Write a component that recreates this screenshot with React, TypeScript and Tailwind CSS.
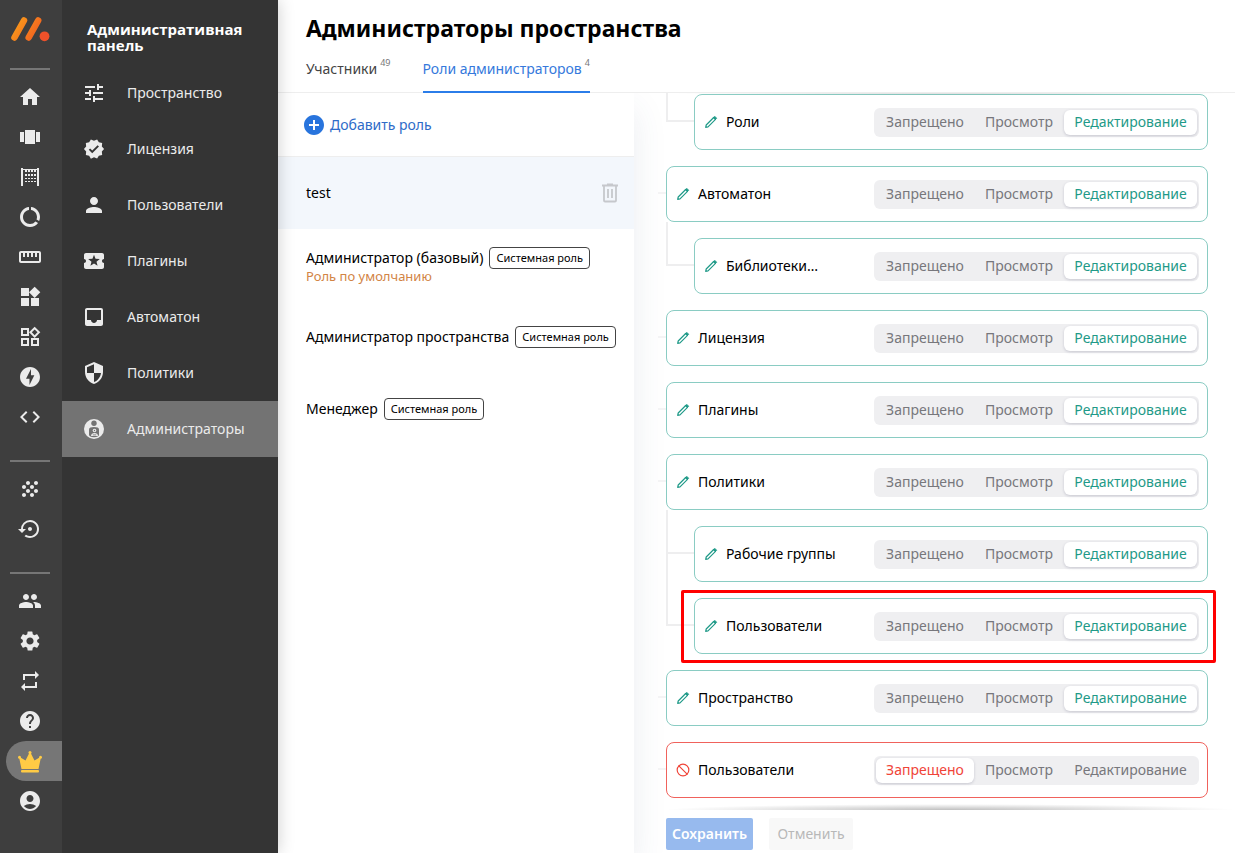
import { useState } from "react";
import type { ReactNode } from "react";
import clsx from "clsx";
import { Ban } from "lucide-react";
import {
  MdAccountCircle,
  MdAddCircle,
  MdCode,
  MdDataUsage,
  MdGrain,
  MdHelp,
  MdHome,
  MdInbox,
  MdLocalActivity,
  MdOfflineBolt,
  MdOutlineWidgets,
  MdPeople,
  MdPerson,
  MdRepeat,
  MdSecurity,
  MdSettings,
  MdSettingsBackupRestore,
  MdStraighten,
  MdTune,
  MdVerified,
  MdViewCarousel,
  MdWidgets,
} from "react-icons/md";

type Access = "none" | "view" | "edit";

type Permission = {
  id: number;
  title: string;
  access: Access;
  nested?: "first" | "next";
  marked?: boolean;
};

const accessOptions: { value: Access; label: string }[] = [
  { value: "none", label: "Запрещено" },
  { value: "view", label: "Просмотр" },
  { value: "edit", label: "Редактирование" },
];

const defaultPermissions: Permission[] = [
  { id: 1, title: "Роли", access: "edit", nested: "next" },
  { id: 2, title: "Автоматон", access: "edit" },
  { id: 3, title: "Библиотеки…", access: "edit", nested: "first" },
  { id: 4, title: "Лицензия", access: "edit" },
  { id: 5, title: "Плагины", access: "edit" },
  { id: 6, title: "Политики", access: "edit" },
  { id: 7, title: "Рабочие группы", access: "edit", nested: "first" },
  { id: 8, title: "Пользователи", access: "edit", nested: "next", marked: true },
  { id: 9, title: "Пространство", access: "edit" },
  { id: 10, title: "Пользователи", access: "none" },
];

function Logo() {
  return (
    <svg width="40" height="26" viewBox="0 0 40 26" aria-hidden="true">
      <defs>
        <linearGradient id="logo" x1="0" y1="0" x2="40" y2="26" gradientUnits="userSpaceOnUse">
          <stop offset="0" stopColor="#fbaa19" />
          <stop offset="1" stopColor="#ef4423" />
        </linearGradient>
      </defs>
      <g stroke="url(#logo)" strokeWidth="6.500" strokeLinecap="round">
        <path d="M4.500 21.500L14 4.500" />
        <path d="M18.700 21.500L28.200 4.500" />
      </g>
      <circle cx="34.500" cy="20.300" r="4.900" fill="#f0512a" />
    </svg>
  );
}

function GateIcon() {
  return (
    <svg width="24" height="24" viewBox="0 0 24 24" fill="currentColor" aria-hidden="true">
      <path d="M3 3h2v18H3zM19 3h2v18h-2zM5 4h14v1H5z" />
      <path d="M7 5h2v2H7zM10 5h2v2h-2zM13 5h2v2h-2zM16 5h2v2h-2z" />
      <path d="M7 9h2v2H7zM10 9h2v2h-2zM13 9h2v2h-2zM16 9h2v2h-2z" />
      <path d="M7 13h2v1H7zM10 13h2v1h-2zM13 13h2v1h-2zM16 13h2v1h-2zM7 16h2v1H7zM10 16h2v1h-2zM13 16h2v1h-2zM16 16h2v1h-2z" />
    </svg>
  );
}

function CrownIcon() {
  return (
    <svg width="24" height="24" viewBox="0 0 24 24" fill="#ffcb45" aria-hidden="true">
      <path d="M3.500 20L1.200 9l1.300-.6L7.500 11.500 11.300 4h1.400l3.800 7.500 5-3.100 1.300.6L20.500 20z" />
      <circle cx="1.500" cy="8.300" r="1.500" />
      <circle cx="12" cy="3.500" r="1.500" />
      <circle cx="22.500" cy="8.300" r="1.500" />
      <rect x="3" y="21" width="18" height="2.500" rx="1" />
    </svg>
  );
}

function AdminIcon() {
  return (
    <svg width="24" height="24" viewBox="0 0 24 24" aria-hidden="true">
      <circle cx="12" cy="12" r="10" fill="#ebebeb" />
      <g fill="#737373">
        <circle cx="12" cy="6.300" r="2.700" />
        <path d="M7 12.500C7 10.700 9 10 12 10s5 .7 5 2.500V18c0 1.200-2 2.200-5 2.200S7 19.200 7 18z" />
      </g>
      <circle cx="12.500" cy="13.500" r="1.800" fill="#ebebeb" />
      <circle cx="12.500" cy="13.500" r="0.700" fill="#737373" />
      <path d="M9 19c0-2 1.500-3 3.500-3s3.500 1 3.500 3z" fill="#ebebeb" />
      <path d="M10.800 17.500h3.400v.8h-3.400z" fill="#737373" />
    </svg>
  );
}

function PencilIcon() {
  return (
    <svg width="14" height="14" viewBox="0 0 14 14" fill="none" stroke="currentColor" aria-hidden="true">
      <path d="M1.700 12.300l.5-2.300L9.700 2.500l1.800 1.800L4 11.800z" strokeWidth="1.200" strokeLinejoin="round" />
      <path d="M9.500 2.700l1.300-1.300 1.800 1.800-1.300 1.300z" fill="currentColor" strokeWidth="1" />
    </svg>
  );
}

function TrashIcon() {
  return (
    <svg width="16" height="20" viewBox="0 0 16 20" fill="none" stroke="currentColor" aria-hidden="true">
      <path d="M0 2.500h16M5 1.500h6" strokeWidth="1.800" />
      <path d="M2 3v14.500q0 1 1 1h10q1 0 1-1V3" strokeWidth="1.800" />
      <path d="M6 6v9M10 6v9" strokeWidth="1.800" />
    </svg>
  );
}

function RailButton({ label, active, children }: { label: string; active?: boolean; children: ReactNode }) {
  return (
    <button
      type="button"
      aria-label={label}
      className={clsx("flex h-10 w-full items-center rounded-l-full pl-3", active && "bg-[#767676]")}
    >
      {children}
    </button>
  );
}

function RailDivider() {
  return <div className="ml-1 h-0.5 w-10 bg-[#767676]"></div>;
}

function Rail() {
  return (
    <nav className="relative z-20 flex w-[62px] shrink-0 flex-col bg-[#3e3e3e] pl-1.5 text-[#ebebeb]">
      <a href="#" aria-label="Главная страница" className="mt-4 mb-[26px] ml-1">
        <Logo />
      </a>
      <RailDivider />
      <div className="mt-[7px] mb-[23px]">
        <RailButton label="Главная"><MdHome size={24} /></RailButton>
        <RailButton label="Карусель"><MdViewCarousel size={24} /></RailButton>
        <RailButton label="Шлюзы"><GateIcon /></RailButton>
        <RailButton label="Данные"><MdDataUsage size={24} /></RailButton>
        <RailButton label="Измерения"><MdStraighten size={24} /></RailButton>
        <RailButton label="Виджеты"><MdWidgets size={24} /></RailButton>
        <RailButton label="Шаблоны"><MdOutlineWidgets size={24} /></RailButton>
        <RailButton label="События"><MdOfflineBolt size={24} /></RailButton>
        <RailButton label="Код"><MdCode size={24} /></RailButton>
      </div>
      <RailDivider />
      <div className="mt-[7px] mb-[23px]">
        <RailButton label="Сетка"><MdGrain size={24} /></RailButton>
        <RailButton label="История"><MdSettingsBackupRestore size={24} /></RailButton>
      </div>
      <RailDivider />
      <div className="mt-[7px]">
        <RailButton label="Группы"><MdPeople size={24} /></RailButton>
        <RailButton label="Настройки"><MdSettings size={24} /></RailButton>
        <RailButton label="Обмен"><MdRepeat size={24} /></RailButton>
        <RailButton label="Помощь"><MdHelp size={24} /></RailButton>
        <RailButton label="Администрирование" active><CrownIcon /></RailButton>
        <RailButton label="Профиль"><MdAccountCircle size={24} /></RailButton>
      </div>
    </nav>
  );
}

const menuItems = [
  { label: "Пространство", icon: <MdTune size={24} /> },
  { label: "Лицензия", icon: <MdVerified size={22} /> },
  { label: "Пользователи", icon: <MdPerson size={24} /> },
  { label: "Плагины", icon: <MdLocalActivity size={24} /> },
  { label: "Автоматон", icon: <MdInbox size={24} /> },
  { label: "Политики", icon: <MdSecurity size={24} /> },
  { label: "Администраторы", icon: <AdminIcon />, active: true },
];

function AdminMenu() {
  return (
    <aside className="relative z-10 w-[216px] shrink-0 bg-[#343434] text-[#ebebeb] shadow-[0_0_16px_rgba(0,0,0,0.2)]">
      <h2 className="px-[25px] pt-[21px] pb-3 font-['Open_Sans',sans-serif] text-[15px] leading-4 font-bold text-white">
        Административная панель
      </h2>
      <nav>
        {menuItems.map((item) => (
          <a
            key={item.label}
            href="#"
            className={clsx("flex h-14 items-center gap-[21px] pl-5 text-sm", item.active && "bg-[#737373]")}
          >
            <span className="flex w-6 justify-center">{item.icon}</span>
            {item.label}
          </a>
        ))}
      </nav>
    </aside>
  );
}

function Header() {
  return (
    <header className="border-b border-[#eeeeee] px-7">
      <h1 className="pt-3 text-[23px] leading-8 font-bold text-black">Администраторы пространства</h1>
      <div className="-mb-px flex gap-8 pt-2 text-sm">
        <a href="#" className="flex h-[41px] gap-[3px] pt-[7px] text-[#444444]">
          Участники
          <span className="text-[9px] leading-2 text-[#777777]">49</span>
        </a>
        <a href="#" className="flex h-[41px] gap-[3px] border-b-2 border-[#2b7de9] pt-[7px] text-[#3579dc]">
          Роли администраторов
          <span className="text-[9px] leading-2 text-[#777777]">4</span>
        </a>
      </div>
    </header>
  );
}

function SystemBadge() {
  return (
    <span className="flex h-[22px] items-center rounded border border-[#444444] px-1.5 text-[11px] text-black">
      Системная роль
    </span>
  );
}

function RoleRow({ name, isDefault }: { name: string; isDefault?: boolean }) {
  return (
    <li className="flex h-[72px] flex-col justify-center px-7 whitespace-nowrap">
      <div className="flex items-center gap-1.5">
        {name}
        <SystemBadge />
      </div>
      {isDefault && <span className="text-[13px] leading-[14px] text-[#d28445]">Роль по умолчанию</span>}
    </li>
  );
}

function RolesColumn() {
  return (
    <section className="relative w-[356px] shrink-0 bg-white text-sm text-black shadow-[0_16px_32px_rgba(60,80,120,0.1)]">
      <button type="button" className="flex h-[63px] w-full items-center gap-1 pl-6 text-[#2e6bc8]">
        <MdAddCircle size={24} className="text-[#2874dd]" />
        Добавить роль
      </button>
      <ul>
        <li className="flex h-[73px] items-center justify-between border-t border-[#eeeeee] bg-[#f3f7fc] pr-4 pl-7">
          test
          <button type="button" aria-label="Удалить роль" className="text-[#c6c8cc]">
            <TrashIcon />
          </button>
        </li>
        <RoleRow name="Администратор (базовый)" isDefault />
        <RoleRow name="Администратор пространства" />
        <RoleRow name="Менеджер" />
      </ul>
    </section>
  );
}

function PermissionRow({ item, onChange }: { item: Permission; onChange: (access: Access) => void }) {
  const denied = item.access === "none";

  return (
    <li className={clsx("flex", item.nested && "pl-2")}>
      {item.nested === "first" && <div className="-mt-4 h-11 w-7 border-b-2 border-l-2 border-[#eeeeef]"></div>}
      {item.nested === "next" && <div className="-mt-12 h-[76px] w-7 border-b-2 border-l-2 border-[#eeeeef]"></div>}
      {!item.nested && <div className="mt-[26px] h-0.5 w-2 bg-[#f4f4f5]"></div>}
      <div
        className={clsx(
          "relative flex h-14 min-w-0 flex-1 items-center rounded-lg border pr-2 pl-[9px]",
          denied ? "border-[#f0625c]" : "border-[#8accc3]"
        )}
      >
        <span className={denied ? "text-[#f04438]" : "text-[#1f9a88]"}>
          {denied ? <Ban size={14} strokeWidth={2} /> : <PencilIcon />}
        </span>
        <span className="min-w-0 flex-1 truncate pl-2 text-sm text-black">{item.title}</span>
        <div role="group" aria-label={item.title} className="flex h-[29px] gap-px rounded-md bg-[#efeff1] p-0.5">
          {accessOptions.map((option) => (
            <button
              key={option.value}
              type="button"
              aria-pressed={item.access === option.value}
              onClick={() => onChange(option.value)}
              className={clsx(
                "rounded-md text-sm leading-5",
                option.value === "none" && "w-[98px]",
                option.value === "view" && "w-[88px]",
                option.value === "edit" && "w-[133px]",
                item.access !== option.value && "text-[#77777c]",
                item.access === option.value && "bg-white shadow-[0_1px_3px_rgba(40,40,80,0.2)]",
                item.access === option.value && (denied ? "text-[#f04438]" : "text-[#1f9a88]")
              )}
            >
              {option.label}
            </button>
          ))}
        </div>
        {item.marked && (
          <div className="pointer-events-none absolute -top-[9px] -right-[9px] -bottom-[10px] -left-[14px] rounded-xs border-3 border-[#ff0000]"></div>
        )}
      </div>
    </li>
  );
}

function PermissionsPanel() {
  const [permissions, setPermissions] = useState(defaultPermissions);

  function changeAccess(id: number, access: Access) {
    setPermissions(permissions.map((p) => (p.id === id ? { ...p, access } : p)));
  }

  return (
    <section className="flex min-w-0 flex-1 flex-col">
      <div className="relative min-h-0 flex-1 overflow-hidden">
        <ul className="flex h-full flex-col gap-4 overflow-y-auto pt-px pr-[27px] pl-6">
          {permissions.map((item) => (
            <PermissionRow key={item.id} item={item} onChange={(access) => changeAccess(item.id, access)} />
          ))}
        </ul>
        {/* scroll shadows */}
        <div className="pointer-events-none absolute top-0 right-0 left-8 h-0.5 bg-[radial-gradient(farthest-side_at_50%_0,rgba(0,0,0,0.15),transparent)]"></div>
        <div className="pointer-events-none absolute right-0 bottom-0 left-8 h-1.5 bg-[radial-gradient(farthest-side_at_50%_100%,rgba(0,0,0,0.25),transparent)]"></div>
      </div>
      <div className="flex gap-4 px-8 pt-2 pb-[3px] text-sm">
        <button type="button" disabled className="h-8 w-[87px] rounded-xs bg-[#97baee] font-semibold text-white">
          Сохранить
        </button>
        <button type="button" disabled className="h-8 w-[84px] rounded-xs bg-[#f8f8f8] text-[#b8b8b8]">
          Отменить
        </button>
      </div>
    </section>
  );
}

function App() {
  return (
    <div className="flex h-screen overflow-hidden bg-white font-['Noto_Sans','Open_Sans',sans-serif]">
      <Rail />
      <AdminMenu />
      <main className="flex min-w-0 flex-1 flex-col">
        <Header />
        <div className="flex min-h-0 flex-1 overflow-hidden">
          <RolesColumn />
          <PermissionsPanel />
        </div>
      </main>
    </div>
  );
}

export default App;
